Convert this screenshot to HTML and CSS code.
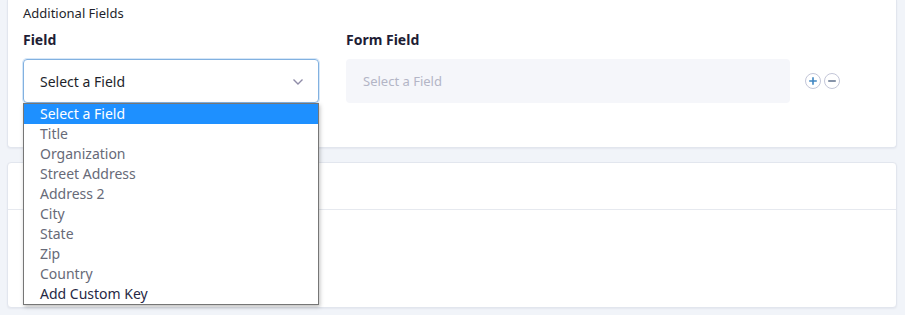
FILE: index.html
```html
<!DOCTYPE html>
<html>
<head>
<meta charset="utf-8">
<link rel="stylesheet" href="styles.css">
</head>
<body>
<div class="page">
  <div class="card card-top">
    <div class="section-title">Additional Fields</div>
    <div class="row">
      <div class="col col-field">
        <div class="label">Field</div>
        <div class="select-wrap">
          <div class="select">
            <span>Select a Field</span>
            <svg class="chev" width="12" height="8" viewBox="0 0 12 8"><path d="M1.5 1.5 L6 6 L10.5 1.5" fill="none" stroke="#8f8ca8" stroke-width="1.4"/></svg>
          </div>
          <ul class="dropdown">
            <li class="opt active">Select a Field</li>
            <li class="opt">Title</li>
            <li class="opt">Organization</li>
            <li class="opt">Street Address</li>
            <li class="opt">Address 2</li>
            <li class="opt">City</li>
            <li class="opt">State</li>
            <li class="opt">Zip</li>
            <li class="opt">Country</li>
            <li class="opt dark">Add Custom Key</li>
          </ul>
        </div>
      </div>
      <div class="col col-form">
        <div class="label">Form Field</div>
        <div class="input-disabled">Select a Field</div>
      </div>
      <div class="actions">
        <span class="circle-btn">
          <svg width="16" height="16" viewBox="0 0 16 16"><circle cx="8" cy="8" r="7.5" fill="#fff" stroke="#c3c6d8"/><path d="M8 4.2 V11.8 M4.2 8 H11.8" stroke="#3f86c2" stroke-width="1.6"/></svg>
        </span>
        <span class="circle-btn">
          <svg width="16" height="16" viewBox="0 0 16 16"><circle cx="8" cy="8" r="7.5" fill="#fff" stroke="#c3c6d8"/><path d="M4.2 8 H11.8" stroke="#6a7a94" stroke-width="1.6"/></svg>
        </span>
      </div>
    </div>
  </div>
  <div class="card card-bottom">
    <div class="card-head"></div>
    <div class="card-body"></div>
  </div>
</div>
</body>
</html>
```
FILE: styles.css
```css
html, body {
  margin: 0;
  padding: 0;
}
body {
  background: #f1f4f9;
  font-family: "Segoe UI", "Noto Sans", "Open Sans", sans-serif;
  color: #1e1f2b;
  width: 905px;
  height: 315px;
  overflow: hidden;
}
.page {
  padding: 0 8px 0 7px;
  display: flex;
  flex-direction: column;
  gap: 14px;
}
.card {
  background: #fff;
  border: 1px solid #e2e6ee;
  border-radius: 4px;
  box-shadow: 0 1px 2px rgba(30, 40, 80, 0.06);
}
.card-top {
  border-top: none;
  border-radius: 0 0 4px 4px;
  height: 148px;
  box-sizing: border-box;
  padding: 3px 15px 0 15px;
}
.section-title {
  font-size: 13px;
  line-height: 20px;
  color: #1e1f2b;
}
.row {
  display: flex;
  align-items: flex-start;
  margin-top: 7px;
}
.label {
  font-size: 14px;
  font-weight: 700;
  line-height: 20px;
  color: #1e1d35;
}
.col-field {
  width: 296px;
}
.col-form {
  width: 444px;
  margin-left: 27px;
}
.select-wrap {
  position: relative;
  margin-top: 9px;
}
.select {
  height: 44px;
  box-sizing: border-box;
  border: 1px solid #82b1e0;
  border-radius: 4px;
  box-shadow: 0 0 0 1px #d6e7f8;
  display: flex;
  align-items: center;
  justify-content: space-between;
  padding: 0 14px 0 16px;
  font-size: 14px;
  color: #1e1f2b;
}
.chev {
  margin-top: 2px;
}
.dropdown {
  position: absolute;
  left: 0;
  top: 44px;
  width: 296px;
  box-sizing: border-box;
  margin: 0;
  padding: 0;
  list-style: none;
  background: #fff;
  border: 1px solid #767676;
  box-shadow: 1px 2px 4px rgba(0, 0, 0, 0.25);
  z-index: 10;
}
.opt {
  height: 20px;
  line-height: 20px;
  font-size: 14px;
  padding-left: 16px;
  color: #676a78;
}
.opt.active {
  background: #1e90ff;
  color: #fff;
}
.opt.dark {
  color: #262845;
}
.input-disabled {
  margin-top: 9px;
  height: 44px;
  box-sizing: border-box;
  background: #f5f6fa;
  border-radius: 4px;
  display: flex;
  align-items: center;
  padding-left: 17px;
  font-size: 13px;
  color: #b3b5c6;
}
.actions {
  display: flex;
  gap: 3px;
  margin-left: 15px;
  margin-top: 43px;
}
.circle-btn {
  display: inline-flex;
  width: 16px;
  height: 16px;
}
.card-bottom {
  height: 146px;
  box-sizing: border-box;
  display: flex;
  flex-direction: column;
}
.card-head {
  height: 46px;
  border-bottom: 1px solid #e6e9ef;
}
.card-body {
  flex: 1;
}
```
